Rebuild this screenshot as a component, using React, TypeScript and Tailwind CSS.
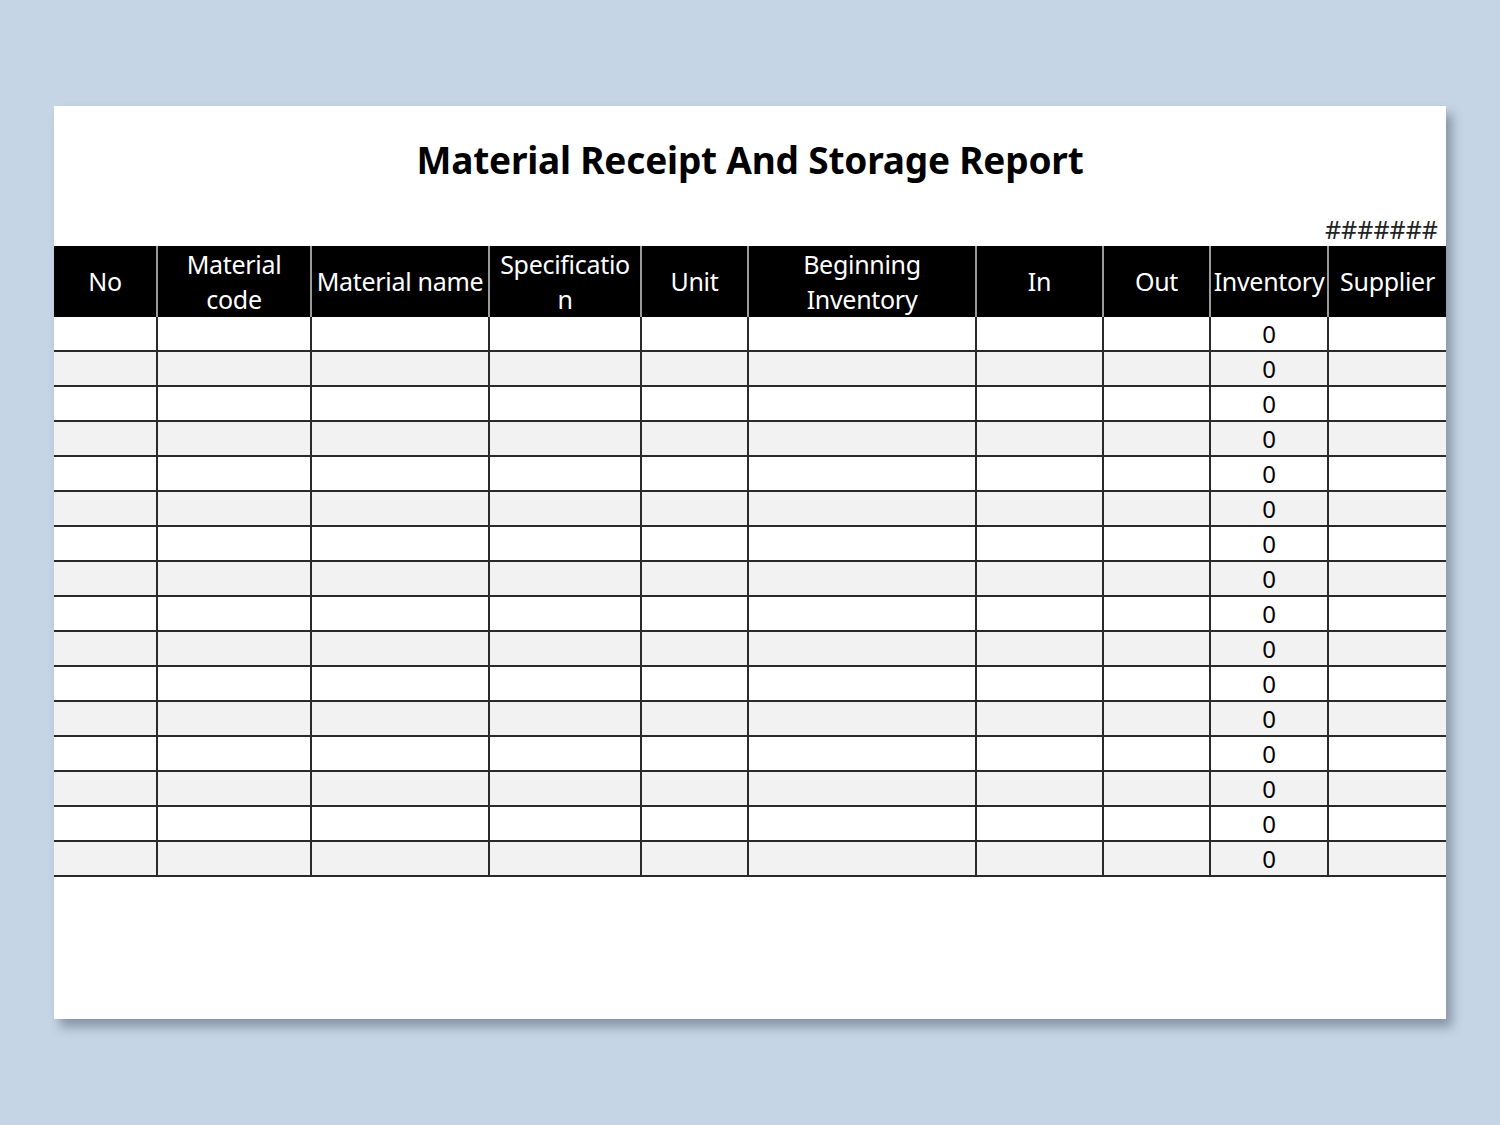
const cols = ["w-[102px]", "w-[154px]", "w-[178px]", "w-[152px]", "w-[107px]", "w-[228px]", "w-[127px]", "w-[107px]", "w-[118px]", "w-[119px]"];
const heads: string[][] = [["No"], ["Material", "code"], ["Material name"], ["Specificatio", "n"], ["Unit"], ["Beginning", "Inventory"], ["In"], ["Out"], ["Inventory"], ["Supplier"]];

export default function App() {
  const rows = Array.from({ length: 16 }, (_, i) => i);
  return (
    <div className="w-[1500px] h-[1125px] bg-[#c5d5e5] pt-[106px] pl-[54px] font-['Open_Sans',sans-serif]">
      <div className="w-[1392px] h-[913px] bg-white shadow-[6px_8px_10px_rgba(60,70,90,0.45)]">
        <div className="h-[110px] flex items-center justify-center pb-[2px] text-[37px] font-bold text-black tracking-[-0.2px]">
          Material Receipt And Storage Report
        </div>
        <div className="h-[30px] flex justify-end items-start pr-[8px] text-[25px] leading-[26px] text-[#222] font-['Liberation_Sans',sans-serif]">#######</div>
        <div className="flex bg-black h-[71px]">
          {heads.map((h, i) => (
            <div key={i} className={`${cols[i]} flex flex-col items-center justify-center text-white text-[25px] leading-[35px] tracking-[-0.3px] ${i > 0 ? "border-l-2 border-[#9a9a9a]" : ""}`}>
              {h.map((t, j) => <span key={j} className="whitespace-nowrap">{t}</span>)}
            </div>
          ))}
        </div>
        {rows.map((r) => (
          <div key={r} className={`flex h-[35px] border-b-2 border-[#2a2a2a] ${r % 2 ? "bg-[#f2f2f2]" : "bg-white"}`}>
            {cols.map((w, i) => (
              <div key={i} className={`${w} flex items-center justify-center text-[24px] text-black ${i > 0 ? "border-l-2 border-[#2a2a2a]" : ""}`}>
                {i === 8 ? "0" : ""}
              </div>
            ))}
          </div>
        ))}
      </div>
    </div>
  );
}
